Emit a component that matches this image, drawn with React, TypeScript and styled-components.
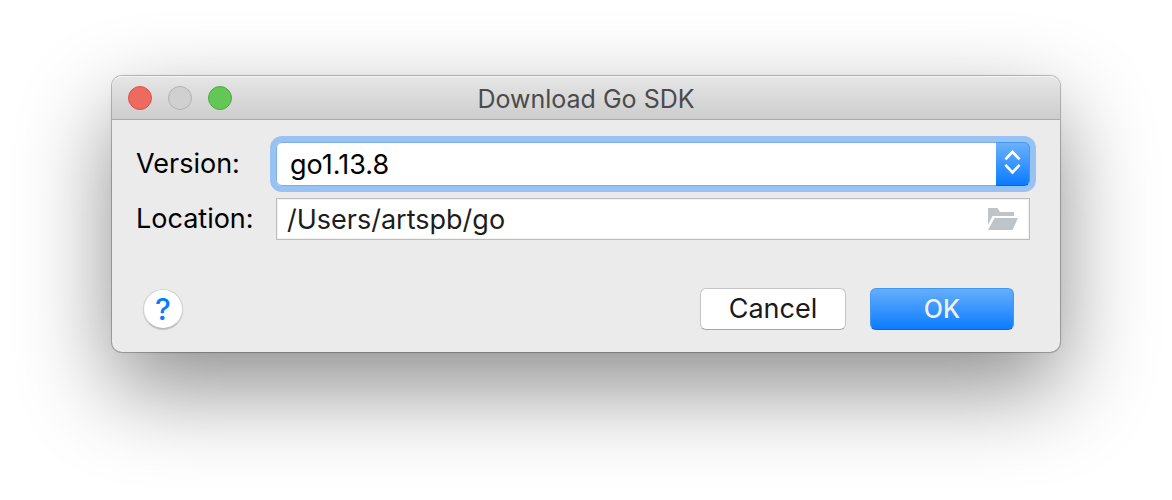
import React from "react";
import styled, { createGlobalStyle } from "styled-components";

const GlobalStyle = createGlobalStyle`
  *, *::before, *::after { box-sizing: border-box; }
  body { margin: 0; background: #fff; }
  body, button, input, select { font-family: Inter, "Liberation Sans", sans-serif; }
`;

const Desktop = styled.main`
  padding: 76px 112px 148px;
  overflow: hidden;
`;

const Window = styled.section`
  border-radius: 10px;
  background: #ebebeb;
  box-shadow:
    0 0 0 1px rgba(0, 0, 0, 0.22),
    0 0 3px rgba(0, 0, 0, 0.1),
    0 36px 92px rgba(0, 0, 0, 0.45);
`;

const TitleBar = styled.header`
  display: grid;
  grid-template-columns: 1fr auto 1fr;
  align-items: center;
  height: 44px;
  padding: 0 16px;
  border-bottom: 1px solid #a9a9a9;
  border-radius: 10px 10px 0 0;
  background: linear-gradient(#e6e6e6, #cdcdcd);
  box-shadow: inset 0 1px #f5f5f5;
`;

const Lights = styled.div`
  display: flex;
  gap: 16px;
`;

const Light = styled.button<{ $fill: string; $edge: string }>`
  width: 24px;
  height: 24px;
  padding: 0;
  border: 1px solid ${(p) => p.$edge};
  border-radius: 50%;
  background: ${(p) => p.$fill};
`;

const Title = styled.h1`
  margin: 0;
  padding-top: 2px;
  color: #4b4b4b;
  font-size: 25px;
  font-weight: 400;
  line-height: 32px;
`;

const Form = styled.form`
  padding: 22px 30px;
`;

const Fields = styled.div`
  display: grid;
  grid-template-columns: 140px 1fr;
  gap: 12px 0;
  align-items: center;
  margin-left: -6px;
`;

const Label = styled.label`
  color: #000;
  font-size: 27px;
  line-height: 32px;
`;

const SelectBox = styled.div`
  display: grid;
  grid-template-columns: 1fr 34px;
  height: 44px;
  border-radius: 6px;
  background: #fff;
  box-shadow: 0 0 0 6px #99c2f4;
`;

const Select = styled.select`
  grid-area: 1 / 1 / 2 / 3;
  width: 100%;
  height: 44px;
  padding: 0 40px 0 13px;
  border: 1px solid #7eade6;
  border-radius: 6px;
  outline: none;
  appearance: none;
  background: transparent;
  color: #000;
  font-size: 27px;
`;

const Stepper = styled.span`
  grid-area: 1 / 2;
  display: flex;
  border: solid #3f97f6;
  border-width: 1px 1px 1px 0;
  border-bottom-color: #0863ea;
  border-radius: 0 6px 6px 0;
  background: linear-gradient(#6bb1fb, #0a7bff);
  pointer-events: none;
  z-index: 1;
`;

const PathBox = styled.div`
  display: flex;
  align-items: center;
  height: 42px;
  padding-right: 11px;
  border: 1px solid #bdbdbd;
  background: #fff;
  box-shadow: inset 0 0 0 1px #f1f1f1;
`;

const PathInput = styled.input`
  flex: 1;
  min-width: 0;
  height: 38px;
  padding: 0 10px;
  border: 0;
  outline: none;
  background: transparent;
  color: #1d1d1d;
  font-size: 27px;
`;

const BrowseButton = styled.button`
  display: flex;
  padding: 0;
  border: 0;
  background: none;
`;

const Footer = styled.footer`
  display: flex;
  align-items: center;
  gap: 24px;
  margin-top: 48px;
  padding: 0 16px 0 1px;
`;

const HelpButton = styled.button`
  width: 40px;
  height: 40px;
  margin-right: auto;
  padding: 0;
  border: 1px solid #d2d2d2;
  border-bottom-color: #bababa;
  border-radius: 50%;
  background: #fff;
  box-shadow: 0 1px 1px rgba(0, 0, 0, 0.16);
  color: #0a7bff;
  font-size: 30px;
  font-weight: 500;
  line-height: 38px;
`;

const Button = styled.button<{ $primary?: boolean }>`
  width: ${(p) => (p.$primary ? 144 : 146)}px;
  height: 42px;
  padding: 0;
  border: 1px solid ${(p) => (p.$primary ? "#3f97f6" : "#c4c4c4")};
  border-bottom-color: ${(p) => (p.$primary ? "#0863ea" : "#a6a6a6")};
  border-radius: 6px;
  background: ${(p) => (p.$primary ? "linear-gradient(#67affb, #0a7bff)" : "#fff")};
  background-origin: border-box;
  color: ${(p) => (p.$primary ? "#f0f0f0" : "#1a1a1a")};
  font-size: ${(p) => (p.$primary ? 25 : 27)}px;
  font-weight: ${(p) => (p.$primary ? 500 : 400)};
  line-height: 32px;
`;

export default function App() {
  return (
    <>
      <GlobalStyle />
      <Desktop>
        <Window role="dialog" aria-labelledby="title">
          <TitleBar>
            <Lights>
              <Light $fill="#ee6a5f" $edge="#d6554b" aria-label="Close" />
              <Light $fill="#d0d0d0" $edge="#b2b2b2" aria-label="Minimize" disabled />
              <Light $fill="#62c755" $edge="#50a945" aria-label="Zoom" />
            </Lights>
            <Title id="title">Download Go SDK</Title>
          </TitleBar>
          <Form onSubmit={(e) => e.preventDefault()}>
            <Fields>
              <Label htmlFor="version">Version:</Label>
              <SelectBox>
                <Select id="version" defaultValue="go1.13.8">
                  <option>go1.13.8</option>
                </Select>
                <Stepper aria-hidden="true">
                  <svg width="33" height="42" viewBox="0 0 33 42" fill="none" stroke="#fff" strokeWidth="2.6">
                    <path d="M10.300 15.500 16.500 8.800l6.200 6.700M10.300 22.800l6.200 6.700 6.200-6.700" strokeLinecap="square" />
                  </svg>
                </Stepper>
              </SelectBox>
              <Label htmlFor="location">Location:</Label>
              <PathBox>
                <PathInput id="location" defaultValue="/Users/artspb/go" spellCheck={false} />
                <BrowseButton type="button" aria-label="Browse">
                  <svg width="30" height="22" viewBox="0 0 30 22" fill="#bfc4c8">
                    <path d="M0 0h9.500l2.500 4h14v4H4.500L0 17z" />
                    <path d="M6.500 10H30l-5.500 12H0z" />
                  </svg>
                </BrowseButton>
              </PathBox>
            </Fields>
            <Footer>
              <HelpButton type="button" aria-label="Help">?</HelpButton>
              <Button type="button">Cancel</Button>
              <Button type="submit" $primary>OK</Button>
            </Footer>
          </Form>
        </Window>
      </Desktop>
    </>
  );
}
